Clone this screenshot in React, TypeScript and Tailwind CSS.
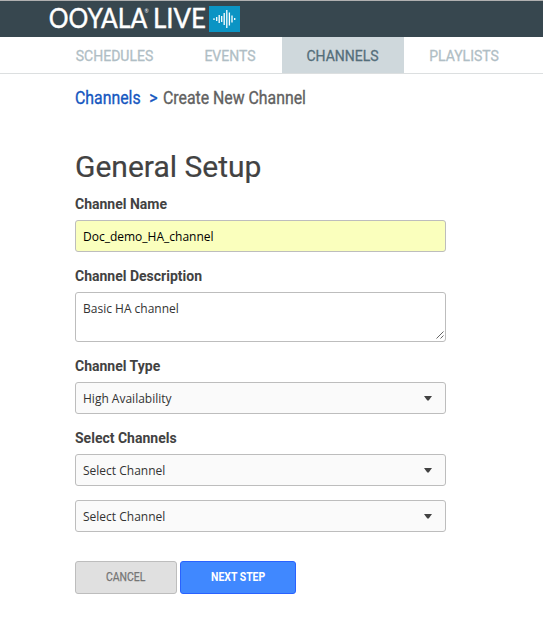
import React from 'react';

const tabs = [
  { label: 'SCHEDULES', width: 'w-[127px]', active: false },
  { label: 'EVENTS', width: 'w-[100px]', active: false },
  { label: 'CHANNELS', width: 'w-[121px] mr-px', active: true },
  { label: 'PLAYLISTS', width: 'w-[116px]', active: false },
];

function Logo() {
  return (
    <svg width="195" height="36" viewBox="45 1 195 36" className="block" aria-label="Ooyala Live">
      <g fill="#fff" fontFamily="Lato, sans-serif" fontSize="26" stroke="#fff" strokeWidth="0.4">
        <text x="48.8" y="28" textLength="98.5" lengthAdjust="spacingAndGlyphs">OOYALA</text>
        <text x="144.5" y="13" fontSize="5" strokeWidth="0">®</text>
        <text x="153" y="28" textLength="53" lengthAdjust="spacingAndGlyphs">LIVE</text>
      </g>
      <rect x="209" y="6" width="31" height="26" fill="#0b94c4" />
      <path
        d="M214 18.2v1.8M216.7 17v4M219.2 15v8M221.7 16v6M224.2 13v12M226.8 10v18M229.4 12.5v13M232 15.5v7M234.7 18v2"
        stroke="#fff"
        strokeWidth="1.3"
      />
    </svg>
  );
}

function Label({ children }: { children: React.ReactNode }) {
  return <div className="h-4 text-sm leading-4 font-bold text-[#424242]">{children}</div>;
}

function Select({ value }: { value: string }) {
  return (
    <div className="flex h-8 items-center justify-between rounded-[3px] border border-[#bdbdbd] bg-[#fafafa] pr-[13px] pl-[7px] font-['Open_Sans',sans-serif] text-xs text-[#333]">
      <span className="pt-[2px]">{value}</span>
      <svg width="8" height="5" viewBox="0 0 8 5">
        <path d="M0 0h8L4.7 4.5H3.3z" fill="#424242" />
      </svg>
    </div>
  );
}

export default function App() {
  return (
    <div className="h-[636px] w-[543px] overflow-hidden bg-white font-['Roboto',sans-serif]">
      <header className="h-[37px] border-t border-[#b0b0b0] bg-[#37474f] pl-[45px]">
        <Logo />
      </header>
      <nav className="flex h-[37px] gap-[2px] border-b border-[#dcdfe0] pl-[51px]">
        {tabs.map((t) => (
          <div
            key={t.label}
            className={`${t.width} flex h-9 shrink-0 items-center justify-center pt-[2px] text-sm [-webkit-text-stroke:0.3px] ${
              t.active ? 'bg-[#cfd8dc] shadow-[1px_0_0_#cfd8dc] text-[#546e7a]' : 'text-[#b0bec5]'
            }`}
          >
            {t.label}
          </div>
        ))}
      </nav>
      <main className="w-[446px] pl-[75px]">
        <div className="mt-3 flex h-6 w-[270px] origin-left scale-x-[0.88] items-center text-lg whitespace-nowrap text-[#616161] [-webkit-text-stroke:0.35px]">
          <span className="text-[#1557c0]">Channels</span>
          <span className="ml-[10px] text-[#1557c0]">&gt;</span>
          <span className="ml-[6px]">Create New Channel</span>
        </div>
        <h1 className="mt-[39px] h-9 text-[30px] leading-9 text-[#424242] [-webkit-text-stroke:0.2px]">
          General Setup
        </h1>
        <div className="mt-[11px]">
          <Label>Channel Name</Label>
          <div className="mt-2 flex h-8 items-center rounded-[3px] border border-[#bdbdbd] bg-[#faffbd] pt-[2px] pl-[7px] font-['Open_Sans',sans-serif] text-xs text-black">
            Doc_demo_HA_channel
          </div>
        </div>
        <div className="mt-4">
          <Label>Channel Description</Label>
          <div className="mt-2 flex h-[50px] justify-between rounded-[3px] border border-[#bdbdbd] bg-white pt-2 pl-[7px] font-['Open_Sans',sans-serif] text-xs text-[#333]">
            <span>Basic HA channel</span>
            <svg width="9" height="9" viewBox="0 0 9 9" className="mb-px self-end">
              <path d="M0.5 7.5l7-7M4.5 7.5l3-3" stroke="#666" fill="none" />
            </svg>
          </div>
        </div>
        <div className="mt-4">
          <Label>Channel Type</Label>
          <div className="mt-2">
            <Select value="High Availability" />
          </div>
        </div>
        <div className="mt-4">
          <Label>Select Channels</Label>
          <div className="mt-2 flex flex-col gap-[14px]">
            <Select value="Select Channel" />
            <Select value="Select Channel" />
          </div>
        </div>
        <div className="mt-[29px] flex gap-[3px]">
          <button className="h-[33px] w-[102px] rounded-[3px] border border-[#bdbdbd] bg-[#e0e0e0] pb-[2px] text-xs text-[#757575] [-webkit-text-stroke:0.25px]">
            <span className="inline-block scale-x-[0.87]">CANCEL</span>
          </button>
          <button className="h-[33px] w-[116px] rounded-[3px] border border-[#2962ff] bg-[#4088ff] pb-[2px] text-xs font-bold text-white">
            <span className="inline-block scale-x-[0.87]">NEXT STEP</span>
          </button>
        </div>
      </main>
    </div>
  );
}
